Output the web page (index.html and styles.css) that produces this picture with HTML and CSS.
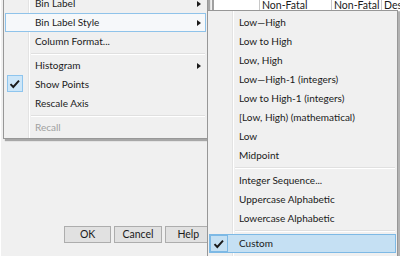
FILE: index.html
```html
<!DOCTYPE html>
<html lang="en">
<head>
  <meta charset="UTF-8">
  <title>Bin Label Style</title>
  <link rel="stylesheet" href="styles.css">
</head>
<body>
  <div class="dialog">
    <div class="dialog-left">
      <div class="buttons">
        <div class="btn">OK</div>
        <div class="btn">Cancel</div>
        <div class="btn">Help</div>
      </div>
    </div>
    <div class="frame"></div>
    <div class="table">
      <div class="thead">
        <div class="th first"></div>
        <div class="th">Non-Fatal</div>
        <div class="th mid">Non-Fatal</div>
        <div class="th">Des</div>
      </div>
    </div>
  </div>

  <!-- context menu -->
  <div class="menu main">
    <div class="item sub-arrow">Bin Label</div>
    <div class="item sub-arrow open">Bin Label Style</div>
    <div class="item">Column Format...</div>
    <div class="sep"></div>
    <div class="item sub-arrow">Histogram</div>
    <div class="item checked"><span class="check"><svg width="12" height="10" viewBox="0 0 12 10"><path d="M1.5 5.2 L4.3 8 L10 1.6" fill="none" stroke="#1a1a1a" stroke-width="1.9"/></svg></span>Show Points</div>
    <div class="item">Rescale Axis</div>
    <div class="sep"></div>
    <div class="item disabled">Recall</div>
  </div>

  <!-- submenu -->
  <div class="menu submenu">
    <div class="item">Low—High</div>
    <div class="item">Low to High</div>
    <div class="item">Low, High</div>
    <div class="item">Low—High-1 (integers)</div>
    <div class="item">Low to High-1 (integers)</div>
    <div class="item">[Low, High) (mathematical)</div>
    <div class="item">Low</div>
    <div class="item">Midpoint</div>
    <div class="sep"></div>
    <div class="item">Integer Sequence...</div>
    <div class="item">Uppercase Alphabetic</div>
    <div class="item">Lowercase Alphabetic</div>
    <div class="sep"></div>
    <div class="item active checked"><span class="check"><svg width="12" height="10" viewBox="0 0 12 10"><path d="M1.5 5.2 L4.3 8 L10 1.6" fill="none" stroke="#1a1a1a" stroke-width="1.9"/></svg></span>Custom</div>
  </div>
</body>
</html>
```

FILE: styles.css
```css
body {
  margin: 0;
  width: 400px;
  height: 256px;
  overflow: hidden;
  position: relative;
  background-color: #f0f0f0;
  font-family: Lato, "Open Sans", sans-serif;
  font-size: 10px;
  color: #1a1a1a;
}
.dialog {
  display: flex;
  height: 256px;
}
.dialog-left {
  width: 211px;
  display: flex;
  flex-direction: column;
  justify-content: flex-end;
  border-left: 1px solid #fff;
}
.buttons {
  display: flex;
  gap: 3px;
  padding: 0 0 13px 63px;
}
.btn {
  width: 46px;
  height: 15px;
  line-height: 15px;
  text-align: center;
  border: 1px solid #adadad;
  background-color: #e1e1e1;
  font-size: 10.5px;
}
.frame {
  width: 10px;
  border-left: 1px solid #a0a0a0;
  border-right: 1px solid #a0a0a0;
  background-color: #f4f4f4;
}
.table {
  flex: 1;
  background-color: #fff;
  border-right: 2px solid #d8d8d8;
}
.thead {
  display: flex;
  height: 11px;
  line-height: 11px;
  font-size: 10.5px;
  border-bottom: 1px solid #d0d0d0;
}
.th {
  padding-left: 2px;
  border-right: 1px solid #c8c8c8;
  white-space: nowrap;
  overflow: hidden;
}
.th.first {
  width: 43px;
}
.th:nth-child(2) {
  width: 69px;
}
.th.mid {
  width: 47px;
}
.th:last-child {
  flex: 1;
  border-right: none;
}

/* menus */
.menu {
  position: absolute;
  box-sizing: border-box;
  border: 1px solid #979797;
  padding: 2px 0;
  background:
    linear-gradient(to right, transparent 24px, #e3e3e3 24px, #e3e3e3 25px, #fff 25px, #fff 26px, transparent 26px),
    #f0f0f0;
  box-shadow: 2px 2px 1px rgba(0, 0, 0, 0.3);
}
.menu.main {
  left: 3px;
  top: -9px;
  width: 205px;
  padding-bottom: 1px;
}
.menu.submenu {
  left: 207px;
  top: 10px;
  width: 191px;
  height: 252px;
}
.item {
  position: relative;
  box-sizing: border-box;
  height: 19px;
  line-height: 17px;
  padding-left: 29px;
  margin: 0 1px;
  border: 1px solid transparent;
  white-space: nowrap;
}
.item.open {
  border-color: #8fc3ea;
  background-color: #f6f8fa;
}
.item.active {
  border-color: #7db9e5;
  background-color: #c5e0f3;
}
.item.disabled {
  color: #a0a0a0;
}
.sub-arrow::after {
  content: "";
  position: absolute;
  right: 4px;
  top: 6px;
  border-left: 4px solid #1a1a1a;
  border-top: 3px solid transparent;
  border-bottom: 3px solid transparent;
}
.check {
  position: absolute;
  left: 1px;
  top: -1px;
  width: 16px;
  height: 17px;
  box-sizing: border-box;
  display: flex;
  align-items: center;
  justify-content: center;
  border: 1px solid #8ec5ee;
  background-color: #cde6f8;
}
.item.active .check {
  top: 0;
  height: 17px;
  left: 0;
  width: 18px;
  border-color: #7db9e5;
  background-color: #c5e0f3;
}
.sep {
  height: 1px;
  margin: 2px 2px 1px 27px;
  background-color: #e0e0e0;
  border-bottom: 1px solid #fff;
}
.submenu .sep {
  margin-bottom: 2px;
}
```
